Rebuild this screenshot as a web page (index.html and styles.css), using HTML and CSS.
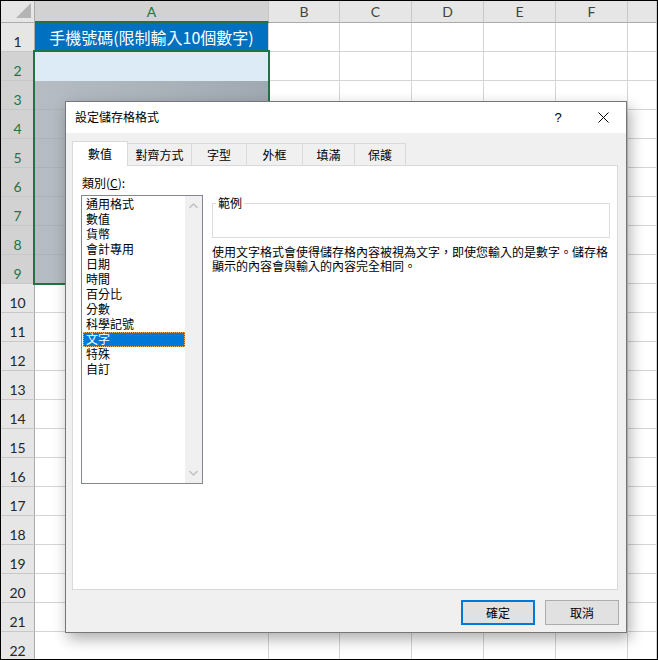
FILE: index.html
```html
<!DOCTYPE html>
<html lang="zh-Hant">
<head>
<meta charset="utf-8">
<title>設定儲存格格式</title>
<link rel="stylesheet" href="styles.css">
</head>
<body>
<div class="page">
  <div class="sheet">
    <div class="c corner"><svg class="tri" width="17" height="16" viewBox="0 0 17 16"><polygon points="16,0 16,15 1,15" fill="#b4b4b4"/></svg></div>
    <div class="c ch sel">A</div><div class="c ch">B</div><div class="c ch">C</div><div class="c ch">D</div><div class="c ch">E</div><div class="c ch">F</div><div class="c ch"></div>

    <div class="c rh">1</div><div class="c a1">手機號碼(限制輸入10個數字)</div><div class="c"></div><div class="c"></div><div class="c"></div><div class="c"></div><div class="c"></div><div class="c"></div>
    <div class="c rh sel">2</div><div class="c a2"></div><div class="c"></div><div class="c"></div><div class="c"></div><div class="c"></div><div class="c"></div><div class="c"></div>
    <div class="c rh sel">3</div><div class="c gray"></div><div class="c"></div><div class="c"></div><div class="c"></div><div class="c"></div><div class="c"></div><div class="c"></div>
    <div class="c rh sel">4</div><div class="c gray"></div><div class="c"></div><div class="c"></div><div class="c"></div><div class="c"></div><div class="c"></div><div class="c"></div>
    <div class="c rh sel">5</div><div class="c gray"></div><div class="c"></div><div class="c"></div><div class="c"></div><div class="c"></div><div class="c"></div><div class="c"></div>
    <div class="c rh sel">6</div><div class="c gray"></div><div class="c"></div><div class="c"></div><div class="c"></div><div class="c"></div><div class="c"></div><div class="c"></div>
    <div class="c rh sel">7</div><div class="c gray"></div><div class="c"></div><div class="c"></div><div class="c"></div><div class="c"></div><div class="c"></div><div class="c"></div>
    <div class="c rh sel">8</div><div class="c gray"></div><div class="c"></div><div class="c"></div><div class="c"></div><div class="c"></div><div class="c"></div><div class="c"></div>
    <div class="c rh sel">9</div><div class="c gray"></div><div class="c"></div><div class="c"></div><div class="c"></div><div class="c"></div><div class="c"></div><div class="c"></div>
    <div class="c rh">10</div><div class="c"></div><div class="c"></div><div class="c"></div><div class="c"></div><div class="c"></div><div class="c"></div><div class="c"></div>
    <div class="c rh">11</div><div class="c"></div><div class="c"></div><div class="c"></div><div class="c"></div><div class="c"></div><div class="c"></div><div class="c"></div>
    <div class="c rh">12</div><div class="c"></div><div class="c"></div><div class="c"></div><div class="c"></div><div class="c"></div><div class="c"></div><div class="c"></div>
    <div class="c rh">13</div><div class="c"></div><div class="c"></div><div class="c"></div><div class="c"></div><div class="c"></div><div class="c"></div><div class="c"></div>
    <div class="c rh">14</div><div class="c"></div><div class="c"></div><div class="c"></div><div class="c"></div><div class="c"></div><div class="c"></div><div class="c"></div>
    <div class="c rh">15</div><div class="c"></div><div class="c"></div><div class="c"></div><div class="c"></div><div class="c"></div><div class="c"></div><div class="c"></div>
    <div class="c rh">16</div><div class="c"></div><div class="c"></div><div class="c"></div><div class="c"></div><div class="c"></div><div class="c"></div><div class="c"></div>
    <div class="c rh">17</div><div class="c"></div><div class="c"></div><div class="c"></div><div class="c"></div><div class="c"></div><div class="c"></div><div class="c"></div>
    <div class="c rh">18</div><div class="c"></div><div class="c"></div><div class="c"></div><div class="c"></div><div class="c"></div><div class="c"></div><div class="c"></div>
    <div class="c rh">19</div><div class="c"></div><div class="c"></div><div class="c"></div><div class="c"></div><div class="c"></div><div class="c"></div><div class="c"></div>
    <div class="c rh">20</div><div class="c"></div><div class="c"></div><div class="c"></div><div class="c"></div><div class="c"></div><div class="c"></div><div class="c"></div>
    <div class="c rh">21</div><div class="c"></div><div class="c"></div><div class="c"></div><div class="c"></div><div class="c"></div><div class="c"></div><div class="c"></div>
    <div class="c rh">22</div><div class="c"></div><div class="c"></div><div class="c"></div><div class="c"></div><div class="c"></div><div class="c"></div><div class="c"></div>
  </div>

  <div class="selection"></div>

  <div class="dialog">
    <div class="titlebar">
      <span class="title">設定儲存格格式</span>
      <span class="help">?</span>
      <span class="close"><svg width="11" height="11" viewBox="0 0 11 11"><path d="M0.5 0.5 L10.5 10.5 M10.5 0.5 L0.5 10.5" stroke="#000" stroke-width="1" fill="none"/></svg></span>
    </div>
    <div class="dbody">
      <div class="tabs">
        <div class="tab active w1">數值</div>
        <div class="tab w2">對齊方式</div>
        <div class="tab w3">字型</div>
        <div class="tab w4">外框</div>
        <div class="tab w5">填滿</div>
        <div class="tab w6">保護</div>
      </div>
      <div class="panel">
        <div class="label">類別(<u>C</u>):</div>
        <div class="prow">
          <div class="listbox">
            <div class="items">
              <div class="item">通用格式</div>
              <div class="item">數值</div>
              <div class="item">貨幣</div>
              <div class="item">會計專用</div>
              <div class="item">日期</div>
              <div class="item">時間</div>
              <div class="item">百分比</div>
              <div class="item">分數</div>
              <div class="item">科學記號</div>
              <div class="item selected">文字</div>
              <div class="item">特殊</div>
              <div class="item">自訂</div>
            </div>
            <div class="vscroll">
              <svg width="9" height="6" viewBox="0 0 9 6"><path d="M0.5 5 L4.5 1 L8.5 5" stroke="#c4c4c4" stroke-width="1.6" fill="none"/></svg>
              <svg width="9" height="6" viewBox="0 0 9 6"><path d="M0.5 1 L4.5 5 L8.5 1" stroke="#c4c4c4" stroke-width="1.6" fill="none"/></svg>
            </div>
          </div>
          <div class="right">
            <fieldset class="sample">
              <legend>範例</legend>
              <div class="sample-body"></div>
            </fieldset>
            <p class="desc">使用文字格式會使得儲存格內容被視為文字，即使您輸入的是數字。儲存格<br>顯示的內容會與輸入的內容完全相同。</p>
          </div>
        </div>
      </div>
      <div class="buttons">
        <button class="btn primary">確定</button>
        <button class="btn">取消</button>
      </div>
    </div>
  </div>
</div>
</body>
</html>
```

FILE: styles.css
```css
body {
  margin: 0;
  background: #fff;
}

.page {
  position: relative;
  width: 658px;
  height: 660px;
  box-sizing: border-box;
  border: 1px solid #000;
  overflow: hidden;
  background: #fff;
  font-family: Lato, "Liberation Sans", "Noto Sans CJK TC", sans-serif;
}

/* ---------- spreadsheet grid ---------- */
.sheet {
  display: grid;
  grid-template-columns: 34px 234px 71px 72px 72px 72px 72px 1fr;
  grid-template-rows: 22px;
  grid-auto-rows: 29px;
}

.c {
  box-sizing: border-box;
  border-right: 1px solid #d4d4d4;
  border-bottom: 1px solid #d4d4d4;
}

.corner {
  background: #e6e6e6;
  border-right: 1px solid #ababab;
  border-bottom: 1px solid #ababab;
  display: flex;
  align-items: flex-end;
  justify-content: flex-end;
  padding: 0 2px 3px 0;
}

.tri {
  display: block;
}

.ch {
  background: #e6e6e6;
  border-right: 1px solid #c8c8c8;
  border-bottom: 1px solid #ababab;
  display: flex;
  align-items: center;
  justify-content: center;
  font-size: 14px;
  color: #444;
}

.ch.sel {
  background: #d2d2d2;
  color: #217346;
  border-bottom: 2px solid #217346;
}

.rh {
  background: #e6e6e6;
  border-right: 1px solid #ababab;
  border-bottom: 1px solid #c8c8c8;
  display: flex;
  justify-content: center;
  align-items: flex-end;
  font-size: 14px;
  line-height: 16px;
  padding-bottom: 1px;
  color: #262626;
}

.rh.sel {
  background: #d2d2d2;
  color: #217346;
}

.a1 {
  background: #0070c0;
  color: #fff;
  font-family: "Noto Sans CJK TC", sans-serif;
  font-size: 16px;
  display: flex;
  align-items: center;
  justify-content: center;
  white-space: nowrap;
}

.a2 {
  background: #ddebf7;
  border-bottom-color: #ddebf7;
}

.gray {
  background: linear-gradient(to right, #b5bcc3, #a0a9b2);
  border-bottom-color: #aab2ba;
}

.selection {
  position: absolute;
  left: 32px;
  top: 49px;
  width: 237px;
  height: 235px;
  box-sizing: border-box;
  border: 2px solid #217346;
}

/* ---------- dialog ---------- */
.dialog {
  position: absolute;
  left: 64px;
  top: 100px;
  width: 562px;
  height: 532px;
  box-sizing: border-box;
  border: 1px solid #777;
  background: #f0f0f0;
  box-shadow: 3px 6px 14px rgba(0, 0, 0, 0.32);
  font-family: "Noto Sans CJK TC", sans-serif;
  font-size: 12px;
  color: #000;
  display: flex;
  flex-direction: column;
}

.titlebar {
  height: 30px;
  background: #fff;
  display: flex;
  align-items: center;
  padding-left: 9px;
  padding-bottom: 1px;
}

.title {
  line-height: 14px;
}

.help {
  margin-left: auto;
  width: 20px;
  margin-right: 12px;
  text-align: center;
  font-size: 13px;
  font-family: "Liberation Sans", sans-serif;
}

.close {
  width: 46px;
  display: flex;
  justify-content: center;
  align-items: center;
}

.close svg {
  display: block;
}

.dbody {
  flex: 1;
  padding: 8px 7px 0 6px;
  display: flex;
  flex-direction: column;
}

.tabs {
  display: flex;
  align-items: flex-end;
  height: 24px;
}

.tab {
  box-sizing: border-box;
  height: 22px;
  border: 1px solid #d9d9d9;
  border-bottom: none;
  background: #f0f0f0;
  display: flex;
  align-items: center;
  justify-content: center;
  margin-left: -1px;
  line-height: 13px;
  padding-bottom: 1px;
}

.tab.active {
  height: 25px;
  margin-left: 0;
  margin-bottom: -1px;
  background: #fff;
  position: relative;
  z-index: 2;
}

.w1 { width: 56px; }
.w2 { width: 65px; }
.w3 { width: 56px; }
.w4 { width: 57px; }
.w5 { width: 53px; }
.w6 { width: 52px; }

.panel {
  width: 546px;
  height: 425px;
  box-sizing: border-box;
  border: 1px solid #d9d9d9;
  background: #fff;
  padding: 11px 0 0 8px;
}

.label {
  line-height: 14px;
  padding-left: 1px;
  margin-top: -1px;
  margin-bottom: 5px;
}

.prow {
  display: flex;
  gap: 9px;
}

.listbox {
  width: 122px;
  height: 289px;
  box-sizing: border-box;
  border: 1px solid #828790;
  background: #fff;
  display: flex;
}

.items {
  flex: 1;
  padding: 1px 0 0 1px;
}

.item {
  height: 15px;
  line-height: 14px;
  padding-left: 3px;
  white-space: nowrap;
  box-sizing: border-box;
}

.item.selected {
  background: #0078d7;
  color: #fff;
  outline: 1px dotted #f3b46a;
  outline-offset: -1px;
}

.vscroll {
  width: 17px;
  background: #f0f0f0;
  display: flex;
  flex-direction: column;
  justify-content: space-between;
  align-items: center;
  padding: 7px 0 7px;
}

.vscroll svg {
  display: block;
}

.right {
  width: 398px;
}

.sample {
  margin: 1px 0 0;
  padding: 0;
  border: 1px solid #dcdcdc;
  min-width: 0;
}

.sample legend {
  padding: 0 2px;
  margin-left: 3px;
  line-height: 14px;
}

.sample-body {
  height: 27px;
}

.desc {
  margin: 7px 0 0;
  line-height: 14px;
  white-space: nowrap;
}

.buttons {
  display: flex;
  justify-content: flex-end;
  gap: 10px;
  margin-top: 10px;
}

.btn {
  width: 74px;
  height: 25px;
  box-sizing: border-box;
  background: #e1e1e1;
  border: 1px solid #adadad;
  font-family: "Noto Sans CJK TC", sans-serif;
  font-size: 12px;
  color: #000;
  padding: 0;
  margin: 0;
}

.btn.primary {
  border: 2px solid #0078d7;
}
```
